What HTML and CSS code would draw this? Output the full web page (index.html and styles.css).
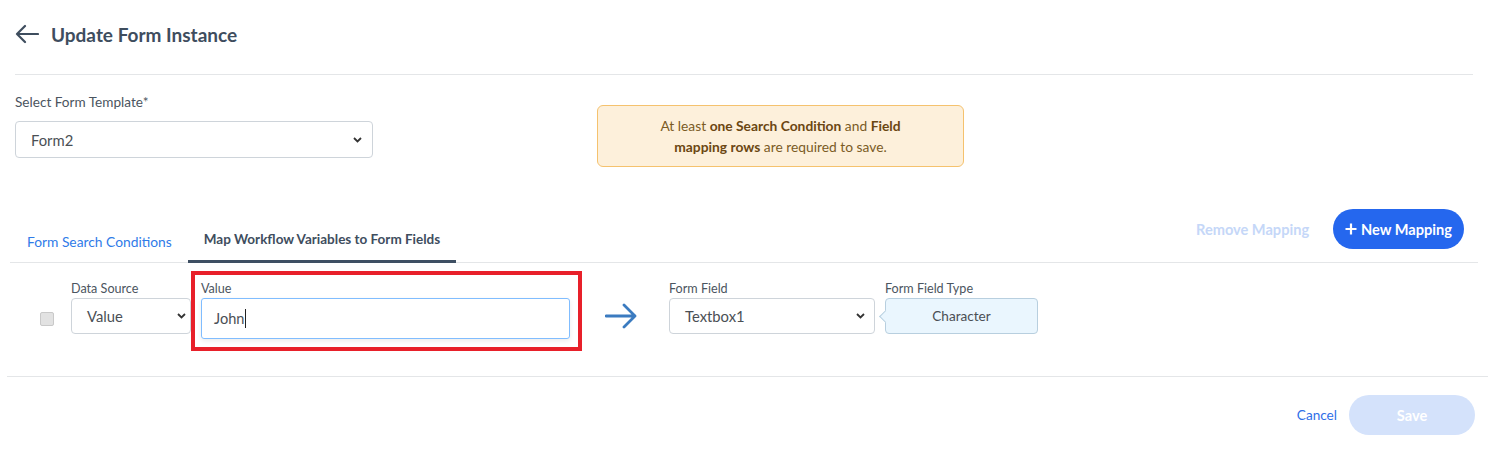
FILE: index.html
```html
<!DOCTYPE html>
<html lang="en">
<head>
    <meta charset="UTF-8">
    <meta name="viewport" content="width=device-width, initial-scale=1.0">
    <title>Update Form Instance</title>
    <link rel="stylesheet" href="styles.css">
</head>
<body>
    <div class="header">
        <svg class="back" width="24" height="20" viewBox="0 0 24 20">
            <path d="M23 10H2M10 2L2 10l8 8" fill="none" stroke="#3e4d5e" stroke-width="2.2" stroke-linecap="round" stroke-linejoin="round"/>
        </svg>
        <h1>Update Form Instance</h1>
    </div>

    <div class="top">
        <div class="template">
            <label class="label">Select Form Template*</label>
            <div class="select select-template">
                <span>Form2</span>
                <svg class="chev" width="9" height="6" viewBox="0 0 9 6"><path d="M1 1l3.5 3.5L8 1" fill="none" stroke="#333" stroke-width="1.8"/></svg>
            </div>
        </div>
        <div class="notice">
            At least <b>one Search Condition</b> and <b>Field<br>mapping rows</b> are required to save.
        </div>
    </div>

    <div class="tabbar">
        <div class="tab">Form Search Conditions</div>
        <div class="tab active">Map Workflow Variables to Form Fields</div>
        <div class="actions">
            <button class="link-btn" disabled>Remove Mapping</button>
            <button class="primary">
                <svg width="12" height="12" viewBox="0 0 12 12"><path d="M6 0.5v11M0.5 6h11" stroke="#fff" stroke-width="2.2"/></svg>
                New Mapping
            </button>
        </div>
    </div>

    <div class="row">
        <div class="check"></div>
        <div class="field">
            <label class="small-label">Data Source</label>
            <div class="select select-source">
                <span>Value</span>
                <svg class="chev" width="9" height="6" viewBox="0 0 9 6"><path d="M1 1l3.5 3.5L8 1" fill="none" stroke="#333" stroke-width="1.8"/></svg>
            </div>
        </div>
        <div class="highlight">
            <label class="small-label">Value</label>
            <div class="input"><span>John</span><span class="caret"></span></div>
        </div>
        <svg class="arrow" width="32" height="26" viewBox="0 0 32 26">
            <path d="M1 13h29M19 2l11 11-11 11" fill="none" stroke="#3b7bc0" stroke-width="2.8" stroke-linecap="round" stroke-linejoin="round"/>
        </svg>
        <div class="field">
            <label class="small-label">Form Field</label>
            <div class="select select-field">
                <span>Textbox1</span>
                <svg class="chev" width="9" height="6" viewBox="0 0 9 6"><path d="M1 1l3.5 3.5L8 1" fill="none" stroke="#333" stroke-width="1.8"/></svg>
            </div>
        </div>
        <div class="field type-field">
            <label class="small-label">Form Field Type</label>
            <div class="type-box">Character</div>
        </div>
    </div>

    <div class="footer">
        <button class="cancel">Cancel</button>
        <button class="save" disabled>Save</button>
    </div>
</body>
</html>
```

FILE: styles.css
```css
/* --- BASE ---------------------------------------------- */
* { box-sizing: border-box; margin: 0; padding: 0; }
body { font-family: "Lato", "Noto Sans", sans-serif; background: #fff; color: #3e4d5e; width: 1507px; }
button { font-family: inherit; border: none; background: none; cursor: pointer; }

/* --- HEADER -------------------------------------------- */
.header {
    display: flex;
    align-items: center;
    height: 75px;
    margin: 0 34px 0 15px;
    padding-bottom: 6px;
    border-bottom: 1px solid #e4e6e8;
}
.back { margin-right: 12px; }
.header h1 { font-size: 19px; font-weight: 700; color: #3e4d5e; }

/* --- TEMPLATE + NOTICE --------------------------------- */
.top { display: flex; padding: 0 15px; }
.template { width: 358px; padding-top: 19px; }
.label { display: block; font-size: 13.6px; line-height: 16px; color: #4b5560; }

.select {
    display: flex;
    align-items: center;
    justify-content: space-between;
    border: 1px solid #ced4da;
    border-radius: 4px;
    background: #fff;
    font-size: 14.8px;
    color: #4a4f55;
}
.select-template { height: 37px; margin-top: 11px; padding: 0 10px 0 15px; }
.chev { flex-shrink: 0; }

.notice {
    width: 367px;
    height: 62px;
    margin: 30px 0 0 224px;
    padding: 9px 10px;
    background: #fdf0db;
    border: 1px solid #f5c26e;
    border-radius: 6px;
    text-align: center;
    font-size: 13.8px;
    line-height: 21px;
    color: #7a5b25;
}
.notice b { color: #6b4712; }

/* --- TABS ---------------------------------------------- */
.tabbar {
    display: flex;
    align-items: flex-end;
    height: 54px;
    margin: 42px 29px 0 10px;
    border-bottom: 1px solid #e4e6e8;
}
.tab {
    font-size: 13.8px;
    color: #2f7be8;
    padding: 0 16px 10px 17px;
    border-bottom: 3px solid transparent;
    margin-bottom: -1px;
}
.tab.active {
    font-size: 13.5px;
    font-weight: 700;
    color: #3e4d5e;
    padding: 0 16px 13px 16px;
    border-bottom-color: #3e4f63;
}
.actions {
    display: flex;
    align-items: center;
    align-self: flex-start;
    margin-left: auto;
    margin-right: 14px;
}
.link-btn { font-size: 14.6px; font-weight: 700; color: #c5d7f8; margin-right: 24px; }
.primary {
    display: flex;
    align-items: center;
    gap: 4px;
    height: 40px;
    padding: 0 12px 0 12px;
    border-radius: 20px;
    background: #2567ee;
    color: #fff;
    font-size: 14.6px;
    font-weight: 700;
}

/* --- MAPPING ROW --------------------------------------- */
.row {
    display: flex;
    align-items: flex-start;
    height: 114px;
    margin: 0 19px 0 7px;
    padding-top: 8px;
    border-bottom: 1px solid #e4e6e8;
}
.check {
    width: 14px;
    height: 14px;
    margin: 41px 17px 0 33px;
    background: #e2e2e2;
    border: 1px solid #c9c9c9;
    border-radius: 2px;
}
.field { padding-top: 10px; }
.small-label { display: block; font-size: 12.6px; line-height: 15px; color: #4b5560; margin-bottom: 2px; }
.select-source { width: 120px; height: 36px; padding: 0 4px 0 15px; }
.select-field { width: 206px; height: 36px; padding: 0 9px 0 15px; }

.highlight {
    width: 391px;
    height: 80px;
    padding: 6px 8px 0 6px;
    border: 4px solid #e8202a;
}
.input {
    display: flex;
    align-items: center;
    height: 41px;
    padding: 0 12px;
    border: 1px solid #80bdff;
    border-radius: 3px;
    box-shadow: 0 2px 5px rgba(0, 0, 0, 0.08);
    font-size: 14.6px;
    color: #4a4f55;
}
.caret { width: 1px; height: 19px; background: #222; margin-left: 1px; }

.arrow { margin: 32px 0 0 23px; flex-shrink: 0; }
.arrow + .field { margin-left: 32px; }

.type-field { margin-left: 10px; }
.type-box {
    position: relative;
    width: 153px;
    height: 36px;
    line-height: 34px;
    text-align: center;
    font-size: 13.6px;
    color: #4a4f55;
    background: #eaf6fe;
    border: 1px solid #b8cfdf;
    border-radius: 4px;
}
.type-box::before {
    content: "";
    position: absolute;
    left: -5px;
    top: 13px;
    width: 8px;
    height: 8px;
    background: #eaf6fe;
    border-left: 1px solid #b8cfdf;
    border-bottom: 1px solid #b8cfdf;
    transform: rotate(45deg);
}

/* --- FOOTER -------------------------------------------- */
.footer {
    display: flex;
    align-items: center;
    justify-content: flex-end;
    gap: 12px;
    padding: 18px 32px 0 0;
}
.cancel { font-size: 13.6px; color: #2f6fe8; }
.save {
    width: 126px;
    height: 40px;
    border-radius: 20px;
    background: #d4e2fb;
    color: #fff;
    font-size: 14.6px;
    font-weight: 700;
}
```
